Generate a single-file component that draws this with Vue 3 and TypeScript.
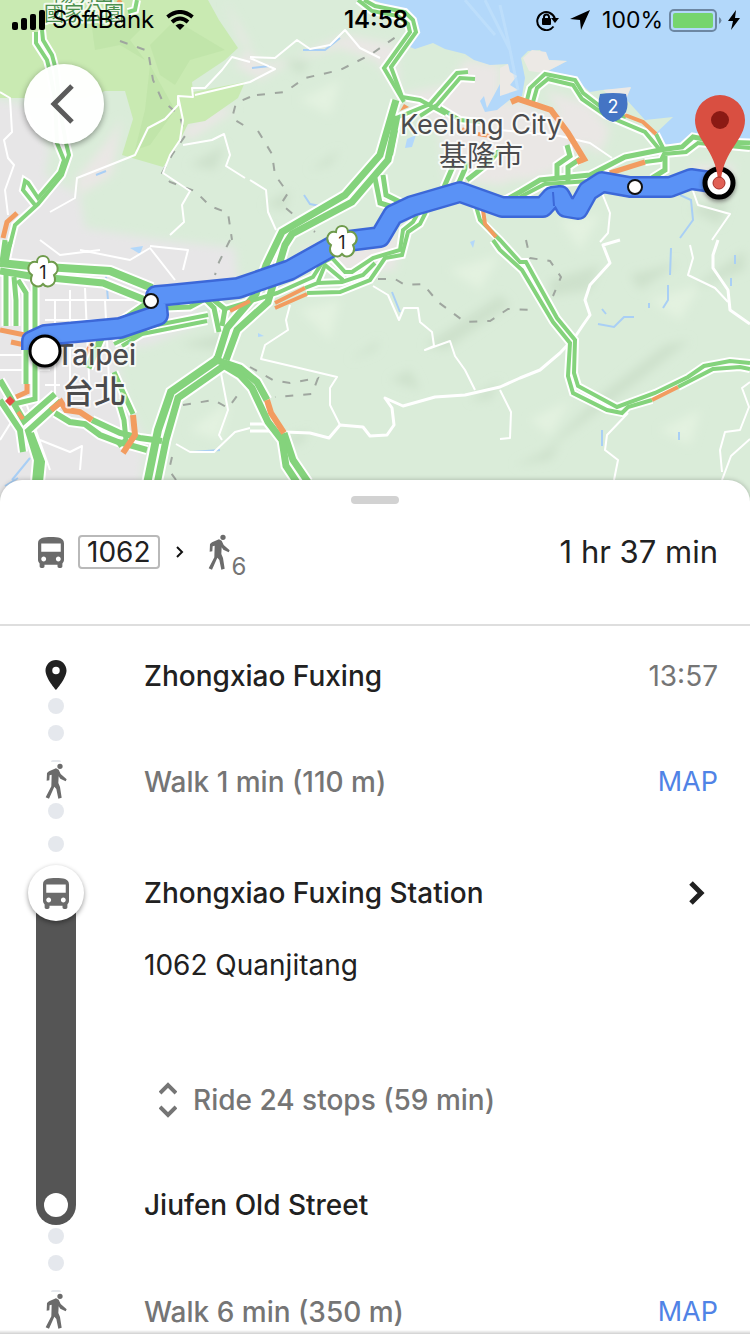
<script setup lang="ts">
interface Road {
  d: string
  w: number
}

const busPath =
  'M4 16c0 .88.39 1.67 1 2.22V20c0 .55.45 1 1 1h1c.55 0 1-.45 1-1v-1h8v1c0 .55.45 1 1 1h1c.55 0 1-.45 1-1v-1.78c.61-.55 1-1.34 1-2.22V6c0-3.5-3.58-4-8-4s-8 .5-8 4v10zm3.5 1c-.83 0-1.5-.67-1.5-1.5S6.67 14 7.5 14s1.5.67 1.5 1.5S8.33 17 7.5 17zm9 0c-.83 0-1.5-.67-1.5-1.5s.67-1.5 1.5-1.5 1.5.67 1.5 1.5-.67 1.5-1.5 1.5zm1.5-6H6V6h12v5z'
const walkPath =
  'M45 2a8 8 0 1 1 0 16a8 8 0 1 1 0-16z M5 53L6 30L12 25L33 16L41 20L47 33L65 49L62 55L46 47L41 40L40 60L45 72L50 104L40 107L34 78L28 71L12 107L2 103L19 70L20 35L14 37L13 52z'

// Free-flowing traffic, one entry per carriageway
const freeRoads: Road[] = [
  { d: 'M36 32V43L47 60L50 72L55 100L57 143L64 160L60 172L38 198L28 183L25 181L23 190L35 205', w: 4 },
  { d: 'M42 30L43 40L52 55L56 70L60 110L66 143L69 155L62 175L38 204L15 225L10 245L2 262', w: 4 },
  { d: 'M137 0L135 10L128 12', w: 4 },
  { d: 'M358 0L372 11L398 16L408 24L410 32L384 68L404 102', w: 4 },
  { d: 'M364 0L375 6L405 12L413 20L416 32L391 67L402 97L420 100L446 114', w: 4 },
  { d: 'M396 100L380 155L345 195L282 232L266 265L256 294L227 328L217 360', w: 7 },
  { d: 'M397 116L388 160L352 202L292 234L285 245L268 302L237 330L226 360', w: 7 },
  { d: 'M396 118L430 104L457 73L468 72M420 116L437 105L460 78L475 79', w: 4 },
  { d: 'M375 178L380 203L396 208M383 175L386 195L402 203', w: 5 },
  { d: 'M396 130L391 155M440 108L460 120L480 122', w: 4 },
  { d: 'M444 187L454 164M457 187L468 162M467 180L485 166L500 150', w: 5 },
  { d: 'M417 215L413 222L403 230L400 250L373 258L352 272L345 272L332 258L322 263L313 277L277 293L222 310', w: 4 },
  { d: 'M426 212L420 224L408 232L402 255L385 258L370 280L340 292L307 293', w: 4 },
  { d: 'M375 263L363 275L342 282L318 283L305 288M318 282L325 265L343 280', w: 4 },
  { d: 'M475 203L480 220L500 240L520 262L526 262L557 318L575 340L574 373L578 386L617 407L655 393L688 377L704 366L730 361L750 363', w: 4 },
  { d: 'M493 240L500 250L522 270L553 322L570 343L568 376L573 393L607 410L622 413L628 407L652 400M678 387L713 369L740 367L750 369', w: 4 },
  { d: 'M527 100L530 88L545 74L575 80L583 93L605 110L626 117', w: 4 },
  { d: 'M533 102L537 88L548 79L573 85L582 99L605 115L645 132L660 150M656 134L664 150', w: 4 },
  { d: 'M500 203L520 192L540 180L590 175L625 157L660 150L682 147L693 137L720 142L750 143', w: 5 },
  { d: 'M520 197L545 184L590 181L610 174M645 162L661 160L664 154L686 152L698 143L750 148', w: 4 },
  { d: 'M567 145L570 156L557 165V180M580 159L568 167V184M665 156V170L652 178', w: 5 },
  { d: 'M0 263L30 266L110 271L152 288', w: 8 },
  { d: 'M0 271L30 276L103 283L150 302L103 334L88 368', w: 7 },
  { d: 'M5 240L2 262M10 242L6 262M6 275V326M14 277L16 300V326M18 280L26 293V384M35 280V399L14 404', w: 5 },
  { d: 'M165 308L190 307L205 299L214 308L219 332M211 298L225 309L222 326', w: 5 },
  { d: 'M122 346L142 334L207 321M114 344L152 326L208 315', w: 4 },
  { d: 'M217 360L171 392L158 430L147 484', w: 8 },
  { d: 'M225 365L178 398L166 440L157 484', w: 7 },
  { d: 'M213 359L240 368L257 382L267 400M284 433L293 460L308 482', w: 7 },
  { d: 'M225 366L240 375L252 388L268 422L282 440L286 466L298 484', w: 7 },
  { d: 'M0 380L24 421L55 394M0 400L20 430L23 452M61 401L28 431L37 460L35 482M31 433L42 462L40 482', w: 6 },
  { d: 'M92 420L120 433L140 438L162 441M55 413L70 422L85 424L100 435L118 442L147 450', w: 6 },
  { d: 'M114 372L122 390L133 414M118 400L124 420L126 440L118 446', w: 5 }
]

// Slow traffic
const slowRoads: Road[] = [
  { d: 'M17 213L7 222L3 238', w: 5 },
  { d: 'M511 102L518 99L551 110L568 133L584 159L577 162', w: 6 },
  { d: 'M625 115L643 122L656 134', w: 4 },
  { d: 'M610 173L645 162', w: 5 },
  { d: 'M483 210L485 224L496 237', w: 4 },
  { d: 'M275 303L305 288M275 308L307 294M250 301L230 311', w: 4 },
  { d: 'M652 400L678 387', w: 4 },
  { d: 'M267 400L271 413L284 433', w: 6 },
  { d: 'M0 330L25 335M11 342L25 345M27 384V392L16 397', w: 5 },
  { d: 'M51 410L61 402L66 410L80 412L92 420M133 415L135 435L123 453', w: 6 },
  { d: 'M18 412L23 419M92 342L84 358M88 3L94 5M118 0L121 3M462 129L466 131M490 136L478 134', w: 4 }
]

const minorRoads =
  'M0 92L10 98L12 132L4 140L8 158L14 165L5 190L8 215M50 212L75 198L77 178L110 165L135 155L148 128L165 119L178 105L178 96L193 97L192 88L205 88L222 70L232 57L250 62M178 96L183 120L180 140L170 155L163 173L190 191L182 205L184 222L170 235M183 145L212 140L224 134L230 155L226 166L245 178M250 57L275 58L297 40L310 49L330 45L345 30L360 48L380 58M250 58L275 69L250 82L195 95M250 180L266 190L268 212L276 230M373 286L388 295L399 320L404 308L418 308L420 322L432 332L434 346L425 350L450 341L455 356L465 370L475 390M290 305L286 320L288 330L265 345L261 359L295 367L337 377L330 388L330 405L340 425M500 130L560 136L590 143L612 158M600 188L610 213L608 233L600 242M692 188L698 205L730 214L712 240M500 390L511 412L510 438L500 439M628 413L607 435L605 450L618 460L614 480M750 382L742 388L749 407L740 430L725 432L720 450L722 472M750 439L731 456L722 480M176 444L190 452L214 452L235 432L250 428M220 368L228 410L219 435L222 440M690 245L693 258L688 275L715 288L728 302M0 440L25 400L50 470M40 440L70 452L82 446L80 470M105 300L110 400M55 300V400M70 290V395M85 288L90 400M45 300H140M45 320H110M0 355H25M0 370H50M45 385H60M80 250L130 260L150 248L175 280M183 270L188 250L150 246M40 240L60 255L100 250'
const majorLocal =
  'M620 240L603 245L610 263L590 285L585 300L590 315L583 325L575 337L560 353L540 370L520 378L500 387L465 395L435 397L403 406L385 398L392 408L394 425L387 435L370 436L363 427L340 425L329 438L310 433L285 432M718 240L713 255L713 268L728 290L730 310L750 324'
const boundaries =
  'M120 41L148 51L153 80L162 100L180 116L185 136L172 155L162 173L170 182L195 191L210 206L228 213L232 240M250 97L236 103L232 118L248 128M257 95L285 92L305 78L340 70L370 55L400 34M258 131L272 154L275 175L288 193L281 204L300 220L315 232M378 279H395L405 285L423 284L438 302L465 322L490 321L508 309L534 310M526 240L530 258L550 261L561 277L553 296M250 367L273 380L290 383L318 378L312 394L275 397M183 405L214 400L228 408L240 392M230 240L219 262L215 275M172 457L169 470L176 480'
const rivers =
  'M303 50L325 50L340 38M252 68L270 66M96 175L106 171M680 195L691 200L693 220L680 238M671 248L670 275M668 285V300L663 308M598 324L614 327L624 317H634M392 292L400 312M250 300L240 315M12 480L30 458M5 486L18 478M105 265L108 300M192 452L220 450M304 195L310 204L320 206M735 255V264M731 278V286M602 309L606 314M649 303V308M679 432V440M602 430V446'

const route =
  'M32 350V341L45 335L120 328L158 315L156 296L168 295L238 288L290 270L340 242L380 237L393 215L412 206L460 192L502 207L543 207L552 197L560 196L566 207L578 209L588 191L602 182L630 187L670 187L691 179L718 183'

const stations = [
  { x: 151, y: 301 },
  { x: 635, y: 187 }
]

const highwayShields = [
  { x: 43, y: 272 },
  { x: 342, y: 242 }
]
</script>

<template>
  <main class="page">
    <section id="map" class="map" aria-label="Route map">
      <svg class="map-canvas" viewBox="0 0 750 504" preserveAspectRatio="xMidYMin slice">
        <defs>
          <filter id="soft" x="-20%" y="-20%" width="140%" height="140%">
            <feGaussianBlur stdDeviation="5" />
          </filter>
          <filter id="drop" x="-50%" y="-50%" width="200%" height="200%">
            <feDropShadow dx="0" dy="2" stdDeviation="2" flood-opacity=".45" />
          </filter>
        </defs>
        <rect width="750" height="504" fill="#daecd9" />
        <g filter="url(#soft)">
          <path fill="#e7e6e7" d="M-10 98L28 105L50 150L45 175L80 195L85 228L150 238L235 248L238 285L200 300L195 325L150 345L115 350L125 400L145 440L140 500H-10z" />
          <path fill="#eae7e5" d="M75 180L108 140L122 118L112 175L80 195zM180 130L220 107L235 110L190 140zM225 0L250 45L235 65L260 80L310 50L345 35L395 45L400 90L375 60L340 48L290 60L262 64L240 40zM400 95L450 85L465 60L500 65V100L580 120L585 150L540 170L500 185L445 178L440 130zM435 120L520 100L560 120L570 165L530 180L460 180zM545 90L590 105L610 130L600 155L570 130zM300 250L400 232L395 270L330 272zM690 165H735L725 205L695 190z" />
          <path fill="#cee1cc" d="M285 60L310 62L300 75zM310 170L340 150L330 165zM265 205L290 190L285 210zM350 360L380 340L375 350zM425 345L500 295L510 305L445 350zM550 280L600 265L590 290L550 296zM600 395L665 345L690 340L640 380L560 440L540 455zM630 275L680 262L640 290zM690 210L730 195L720 225zM390 380L410 370L420 390zM190 165L225 145L215 170zM280 440L310 430L300 445zM515 465L560 445L550 460zM180 345L235 330L220 350zM690 290L745 250V270zM470 400L500 380L490 400z" />
          <path fill="#e3f2e0" d="M300 310L340 300L330 340zM450 270L500 255L480 290zM530 420L570 400L550 435zM650 300L700 285L680 320zM190 430L230 400L220 440zM300 100L340 80L330 115zM560 220L600 215L580 250zM660 430L700 410L690 445z" />
        </g>
        <path fill="#c9eab2" d="M0 0H208L219 20L238 48L225 60L192 82L193 92L245 82L238 98L205 121L188 124L175 150L163 167L122 155L133 119L125 91L105 91L85 98L0 98z" />
        <path fill="#bde2a6" opacity=".7" d="M90 12L150 20L130 40L145 60L120 45L95 50zM150 45L175 20L225 50L190 60L175 85L160 75zM150 65L175 110L150 145L135 150L145 110z" />
        <path fill="#b3d8fa" d="M373 0L400 10L416 25L417 35L405 45L415 49L433 43L445 49L465 54L474 60L490 65L508 64L509 72L500 73L512 79L506 90L500 84L487 108L484 96L480 101L485 112L497 110L512 98L522 96L525 78L521 58L528 51L540 50L549 60L567 61L544 73L575 79L590 92L602 90L631 88L625 98L645 120L673 117L655 134L661 144L680 145L695 134L722 139L750 148V0z" />
        <path fill="#ece9e5" d="M500 68L508 64L510 72L517 76L510 85L518 90L500 96zM523 58L532 50L546 52L549 60L567 61L544 73L529 71zM603 90L631 87L627 97L612 98z" />
        <path fill="none" stroke="#c3e2fb" stroke-width="3" d="M500 5L508 40L518 90M485 0L510 50M465 0L495 35" opacity=".6" />
        <path fill="#b3d8fa" d="M407 139L416 135L412 147L405 148zM130 248L143 246L140 254zM258 333L264 336L258 337zM470 242L475 240L473 248z" />
        <path fill="none" stroke="#a9cff5" stroke-width="2" :d="rivers" />
        <path fill="none" stroke="#9fa69f" stroke-width="2" stroke-dasharray="8 10" :d="boundaries" />
        <path fill="none" stroke="#fff" stroke-width="2" stroke-linejoin="round" :d="minorRoads" />
        <path fill="none" stroke="#fff" stroke-width="3" stroke-linejoin="round" :d="majorLocal" />
        <path fill="none" stroke="#fff" stroke-width="3" d="M250 424H272M250 431H278" />
        <g fill="none" stroke="#fff">
          <path v-for="road in freeRoads" :key="road.d" :d="road.d" :stroke-width="road.w + 4" />
        </g>
        <g fill="none" stroke="#84d37c">
          <path v-for="road in freeRoads" :key="road.d" :d="road.d" :stroke-width="road.w" />
        </g>
        <g fill="none" stroke="#f29c60">
          <path v-for="road in slowRoads" :key="road.d" :d="road.d" :stroke-width="road.w" />
        </g>
        <path fill="#e34f45" d="M10 396L15 401L10 406L5 401z" />
        <path fill="#f29c60" d="M404 104L409 107L400 111z" />

        <g class="place" text-anchor="middle">
          <text class="park" x="84" y="2">陽明山</text>
          <text class="park" x="84" y="21">國家公園</text>
          <text class="city" x="481" y="134">Keelung City</text>
          <text class="city han-city" x="481" y="166">基隆市</text>
          <text class="capital" x="96" y="365">Taipei</text>
          <text class="capital han" x="94" y="403">台北</text>
        </g>

        <path fill="none" stroke="#3c68d8" stroke-width="22" stroke-linejoin="round" :d="route" />
        <path fill="none" stroke="#5a92f6" stroke-width="17" stroke-linejoin="round" :d="route" />
        <path fill="none" stroke="#3c68d8" stroke-width="2" d="M553 192L554 206" />

        <g v-for="shield in highwayShields" :key="shield.x" :transform="`translate(${shield.x} ${shield.y})`">
          <path fill="#fff" stroke="#6f9b4c" stroke-width="2" d="M-6-10C-6-18 6-18 6-10C14-12 18-2 11 3C15 12 5 18 0 12C-5 18-15 12-11 3C-18-2-14-12-6-10z" />
          <text class="shield" y="7" text-anchor="middle">1</text>
        </g>
        <path fill="#4474c4" d="M600 94Q613 92 626 94Q629 105 626 112Q621 120 613 122Q605 120 600 112Q597 105 600 94z" />
        <text class="shield light" x="613" y="113" text-anchor="middle">2</text>

        <circle v-for="s in stations" :key="s.x" :cx="s.x" :cy="s.y" r="7" fill="#fff" stroke="#111" stroke-width="2" />
        <circle cx="45" cy="351" r="15" fill="#fff" stroke="#000" stroke-width="3" filter="url(#drop)" />
        <circle cx="719" cy="183" r="14" fill="#fff" stroke="#000" stroke-width="5" filter="url(#drop)" />
        <path fill="#d94f41" d="M720 95A25 25 0 0 1 745 120C745 140 724 150 721 180H718C716 150 695 140 695 120A25 25 0 0 1 720 95z" />
        <circle cx="720" cy="120" r="9" fill="#8b1a14" />
        <circle cx="719" cy="183" r="6" fill="#e06055" stroke="#a92f27" stroke-width="1" />
      </svg>

      <header class="status">
        <div class="status-side">
          <svg width="34" height="20" viewBox="0 0 34 20" aria-hidden="true">
            <rect x="0" y="12" width="6" height="8" rx="2" />
            <rect x="9" y="8" width="6" height="12" rx="2" />
            <rect x="18" y="4" width="6" height="16" rx="2" />
            <rect x="27" y="0" width="6" height="20" rx="2" />
          </svg>
          <span>SoftBank</span>
          <svg class="wifi" width="28" height="20" viewBox="0 0 28 20" aria-hidden="true">
            <path d="M14 20L9.500 15.500Q14 12 18.500 15.500z" />
            <path fill="none" stroke="#000" stroke-width="4" d="M6 12Q14 5 22 12M1.500 7Q14-3 26.500 7" />
          </svg>
        </div>
        <strong>14:58</strong>
        <div class="status-side end">
          <svg width="24" height="22" viewBox="0 0 24 22" aria-hidden="true">
            <path fill="none" stroke="#000" stroke-width="2" d="M17.500 17.500A9 9 0 1 1 19 10" />
            <path d="M15 9H23L19 14z" />
            <rect x="6" y="9" width="9" height="7" rx="1" />
            <path fill="none" stroke="#000" stroke-width="2" d="M8 10V8a2.500 2.500 0 0 1 5 0V10" />
          </svg>
          <svg class="arrow" width="20" height="20" viewBox="0 0 20 20" aria-hidden="true">
            <path d="M20 0L11 20L10 10L0 9z" />
          </svg>
          <span class="charge">100%</span>
          <svg class="battery" width="53" height="23" viewBox="0 0 53 23" aria-hidden="true">
            <rect x="1" y="1" width="46" height="21" rx="4" fill="none" stroke="#6d87a2" stroke-width="2" />
            <rect x="4" y="4" width="40" height="15" rx="2" fill="#76d56d" />
            <path fill="#6d87a2" d="M50 8Q55 11.500 50 15z" />
          </svg>
          <svg width="12" height="20" viewBox="0 0 12 20" aria-hidden="true">
            <path d="M8 0L0 11H5L3 20L12 8H7z" />
          </svg>
        </div>
      </header>

      <button class="back" type="button" aria-label="Back">
        <svg width="24" height="40" viewBox="0 0 24 40" aria-hidden="true">
          <path fill="none" stroke="#5b5b5b" stroke-width="5" d="M22 2L4 20L22 38" />
        </svg>
      </button>
    </section>

    <section class="sheet">
      <div class="grip"></div>
      <div class="summary">
        <svg width="26" height="31" viewBox="4 2 16 19" aria-hidden="true"><path fill="#6b6b6b" :d="busPath" /></svg>
        <span class="line">1062</span>
        <svg class="next" width="8" height="12" viewBox="0 0 8 12" aria-hidden="true">
          <path fill="none" stroke="#111" stroke-width="2" d="M1 1L6 6L1 11" />
        </svg>
        <svg width="22" height="36" viewBox="0 0 66 108" aria-hidden="true"><path fill="#6b6b6b" :d="walkPath" /></svg>
        <span class="walk-minutes">6</span>
        <span class="duration">1 hr 37 min</span>
      </div>

      <ol class="steps">
        <li class="step origin">
          <div class="rail">
            <svg width="22" height="30" viewBox="5 2 14 20" aria-hidden="true">
              <path fill="#212121" fill-rule="evenodd" d="M12 2C8.130 2 5 5.130 5 9c0 5.250 7 13 7 13s7-7.750 7-13c0-3.870-3.130-7-7-7zm0 9.500a2.500 2.500 0 1 1 0-5a2.500 2.500 0 0 1 0 5z" />
            </svg>
            <i class="dot near"></i>
            <i class="dot"></i>
          </div>
          <h2>Zhongxiao Fuxing</h2>
          <time>13:57</time>
        </li>

        <li class="step walk">
          <div class="rail">
            <i class="cap"></i>
            <svg width="22" height="36" viewBox="0 0 66 108" aria-hidden="true"><path fill="#6b6b6b" :d="walkPath" /></svg>
            <i class="dot"></i>
            <i class="dot far"></i>
          </div>
          <p>Walk 1 min (110 m)</p>
          <a href="#map">MAP</a>
        </li>

        <li class="step ride">
          <div class="rail">
            <div class="ride-bar">
              <span class="ride-icon">
                <svg width="26" height="31" viewBox="4 2 16 19" aria-hidden="true"><path fill="#6b6b6b" :d="busPath" /></svg>
              </span>
              <span class="ride-end"></span>
            </div>
          </div>
          <div class="ride-text">
            <div class="station">
              <h2>Zhongxiao Fuxing Station</h2>
              <button type="button" aria-label="Station details">
                <svg width="16" height="24" viewBox="0 0 16 24" aria-hidden="true">
                  <path fill="none" stroke="#212121" stroke-width="5" d="M2 2L12 12L2 22" />
                </svg>
              </button>
            </div>
            <p class="headsign">1062 Quanjitang</p>
            <button class="stops" type="button">
              <svg width="18" height="36" viewBox="0 0 18 36" aria-hidden="true">
                <path fill="none" stroke="#757575" stroke-width="4" d="M1 11L9 3L17 11M1 25L9 33L17 25" />
              </svg>
              Ride 24 stops (59 min)
            </button>
            <h2>Jiufen Old Street</h2>
          </div>
        </li>

        <li class="step walk last">
          <div class="rail">
            <i class="dot"></i>
            <i class="dot"></i>
            <i class="cap"></i>
            <svg width="22" height="36" viewBox="0 0 66 108" aria-hidden="true"><path fill="#6b6b6b" :d="walkPath" /></svg>
          </div>
          <p>Walk 6 min (350 m)</p>
          <a href="#map">MAP</a>
        </li>
      </ol>
    </section>
    <div class="bottom-edge"></div>
  </main>
</template>

<style>
body {
  margin: 0;
  background: #fff;
}
</style>

<style scoped>
.page {
  min-height: 100vh;
  font-family: Inter, "Noto Sans CJK TC", sans-serif;
  font-size: 28px;
  line-height: 36px;
  color: #212121;
}
button {
  border: 0;
  padding: 0;
  background: none;
  font: inherit;
  color: inherit;
}
svg {
  display: block;
  flex: none;
}
.map {
  position: relative;
}
.map-canvas {
  width: 100%;
  height: 504px;
}
.place text {
  fill: #4b4b4d;
  stroke: #fff;
  stroke-opacity: .75;
  stroke-width: 4px;
  paint-order: stroke;
  stroke-linejoin: round;
}
.place .park {
  font-size: 20px;
  fill: #4b8f4f;
}
.place .city {
  font-size: 27px;
}
.place .han-city {
  font-size: 28px;
}
.place .capital {
  font-size: 28px;
  font-weight: 500;
}
.place .han {
  font-size: 32px;
}
.shield {
  font-size: 18px;
  fill: #222;
}
.light {
  fill: #fff;
}
.status {
  position: absolute;
  inset: 0 0 auto;
  display: grid;
  grid-template-columns: 1fr auto 1fr;
  align-items: center;
  height: 40px;
  padding: 0 10px 0 12px;
  font-size: 24px;
  line-height: 40px;
  color: #000;
}
.status strong {
  font-weight: 600;
}
.status-side {
  display: flex;
  align-items: center;
  gap: 6px;
}
.wifi {
  margin-left: 6px;
}
.end {
  justify-content: flex-end;
}
.arrow {
  margin: 0 6px 0 4px;
}
.charge {
  font-size: 23px;
}
.back {
  position: absolute;
  left: 24px;
  top: 64px;
  display: flex;
  align-items: center;
  justify-content: center;
  width: 80px;
  height: 80px;
  padding-right: 4px;
  border-radius: 50%;
  background: rgba(255, 255, 255, .97);
  box-shadow: 0 2px 6px rgba(0, 0, 0, .4);
}
.sheet {
  position: relative;
  margin-top: -24px;
  padding-top: 16px;
  border-radius: 22px 22px 0 0;
  background: #fff;
  box-shadow: 0 0 5px rgba(0, 0, 0, .25);
}
.grip {
  width: 48px;
  height: 8px;
  margin: 0 auto;
  border-radius: 4px;
  background: #d2d2d2;
}
.summary {
  display: flex;
  align-items: center;
  height: 96px;
  padding: 0 32px 24px 38px;
  border-bottom: 2px solid #dedede;
}
.line {
  margin-left: 14px;
  padding: 0 7px;
  border: 2px solid #b9b9b9;
  border-radius: 4px;
  line-height: 30px;
}
.next {
  margin: 0 24px 0 16px;
}
.walk-minutes {
  margin-top: 30px;
  margin-left: 2px;
  font-size: 24px;
  line-height: 32px;
  color: #757575;
}
.duration {
  margin-left: auto;
  font-size: 31px;
}
.steps {
  margin: 0;
  padding: 0;
  list-style: none;
}
.step {
  display: grid;
  grid-template-columns: 112px 1fr auto;
  column-gap: 32px;
  padding-right: 32px;
}
h2,
p {
  margin: 0;
  font-size: 28px;
  line-height: 36px;
  font-weight: 500;
}
p,
time {
  color: #757575;
}
a {
  font-size: 27px;
  color: #5083e6;
  text-decoration: none;
}
.rail {
  display: flex;
  flex-direction: column;
  align-items: center;
}
.dot {
  flex: none;
  width: 16px;
  height: 16px;
  margin-bottom: 11px;
  border-radius: 50%;
  background: #e5e8ed;
}
.near {
  margin-top: 8px;
}
.cap {
  flex: none;
  width: 10px;
  height: 2px;
  border-radius: 8px 8px 0 0;
  background: #e5e8ed;
}
.origin {
  height: 134px;
}
.origin .rail {
  padding-top: 34px;
}
.origin h2,
.origin time {
  padding-top: 32px;
}
.walk {
  height: 105px;
}
.walk svg {
  margin: 1px 0 4px;
}
.walk .far {
  margin-top: 6px;
}
.walk p,
.walk a {
  padding-top: 4px;
}
.ride {
  grid-template-columns: 112px 1fr;
  min-height: 360px;
}
.ride-bar {
  display: flex;
  flex-direction: column;
  align-items: center;
  justify-content: space-between;
  width: 40px;
  flex: 1;
  padding-bottom: 8px;
  border-radius: 0 0 20px 20px;
  background: linear-gradient(transparent 28px, #555 28px);
}
.ride-icon {
  display: flex;
  align-items: center;
  justify-content: center;
  width: 56px;
  height: 56px;
  border-radius: 50%;
  background: #fff;
  box-shadow: 0 2px 5px rgba(0, 0, 0, .4);
}
.ride-end {
  width: 24px;
  height: 24px;
  border-radius: 50%;
  background: #fff;
}
.ride-text {
  padding-top: 10px;
}
.station {
  display: flex;
  align-items: center;
  justify-content: space-between;
  padding-right: 13px;
}
.headsign {
  margin-top: 36px;
  font-weight: 400;
  color: #212121;
}
.stops {
  display: flex;
  align-items: center;
  gap: 16px;
  margin: 99px 0 69px 15px;
  font-weight: 500;
  color: #757575;
}
.last {
  height: 109px;
}
.last .rail {
  padding-top: 3px;
}
.last .cap {
  margin-top: 8px;
}
.last p,
.last a {
  padding-top: 69px;
}
.bottom-edge {
  position: fixed;
  inset: auto 0 0;
  height: 4px;
  background: linear-gradient(transparent, #d0d0d0);
}
</style>
